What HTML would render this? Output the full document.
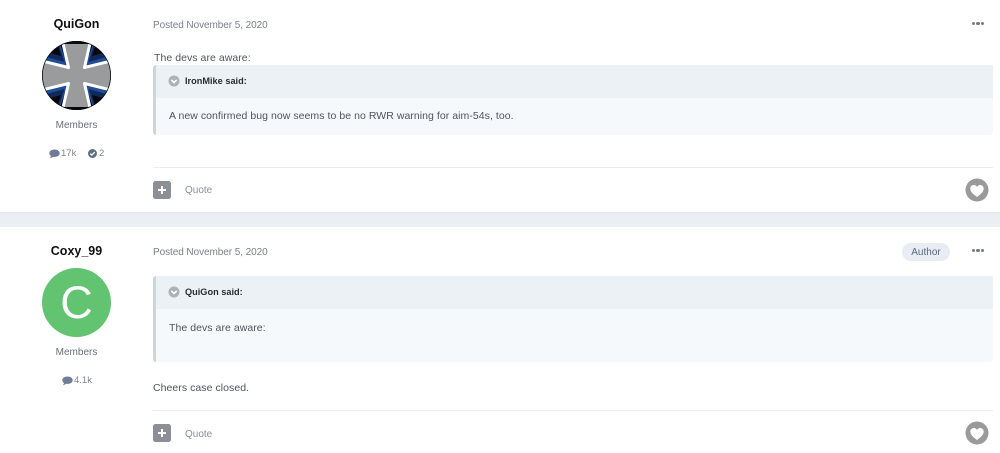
<!DOCTYPE html>
<html>
<head>
<meta charset="utf-8">
<style>
html,body{margin:0;padding:0;background:#fff}
body{position:relative;width:1000px;height:453px;overflow:hidden;font-family:"Liberation Sans",sans-serif;color:#4a4e55;filter:blur(.35px)}
.t{position:absolute;white-space:nowrap;line-height:16px}
.name{font-size:12.5px;font-weight:bold;color:#111;width:153px;left:0;text-align:center}
.mem{font-size:10px;color:#6b6f78;left:0;width:153px;text-align:center}
.date{font-size:10px;color:#7b7f88;left:153px;letter-spacing:-.07px}
.body{font-size:10.5px;letter-spacing:.05px;color:#50545c}
.stat{font-size:9.5px;color:#7f8590}
.bold{font-size:9.2px;font-weight:bold;color:#2a2d33}
.box{position:absolute;left:153px;width:840px;background:#f5f9fc;border-left:3px solid #cfd4da;border-radius:3px;box-sizing:border-box}
.boxh{position:absolute;left:0;right:0;top:0;height:33px;background:#ecf1f5}
.line{position:absolute;left:153px;width:840px;height:1px;background:#eaecee}
.plus{position:absolute;left:153px;width:18px;height:18px;border-radius:2.5px;background:#8d8f97}
.plus:before{content:"";position:absolute;left:5px;top:8px;width:8px;height:2px;background:#fff}
.plus:after{content:"";position:absolute;left:8px;top:5px;width:2px;height:8px;background:#fff}
.quote{font-size:10px;color:#8a8e96;left:185px}
.dots{position:absolute;left:972px;width:12px;height:4px;display:flex;gap:.9px}
.dots i{display:block;width:3.4px;height:3.4px;border-radius:50%;background:#767c88}
svg{position:absolute;display:block}
</style>
</head>
<body>

<div class="t name" style="top:16px">QuiGon</div>
<svg style="left:42px;top:41px" width="69" height="69" viewBox="0 0 69 69">
  <defs><clipPath id="c"><circle cx="34.5" cy="34.5" r="34.5"/></clipPath></defs>
  <g clip-path="url(#c)">
    <rect width="69" height="69" fill="#05070c"/>
    <path d="M43 26 L52 0 L69 17 V22Z M26 26 L17 0 L0 17 V22Z M43 43 L52 69 L69 52 V47Z M26 43 L17 69 L0 52 V47Z" fill="#1f4d96"/>
    <path d="M46.500 21 L52 4 L66 15.500Z M22.500 21 L17 4 L3 15.500Z M46.500 48 L52 65 L66 53.500Z M22.500 48 L17 65 L3 53.500Z" fill="#10295a"/>
    <path d="M50 15 L53 5 L61 12Z M19 15 L16 5 L8 12Z M50 54 L53 64 L61 57Z M19 54 L16 64 L8 57Z" fill="#05070c"/>
    <path d="M20 -2 H49 L42.500 26.500 L71 19.500 V49.500 L42.500 42.500 L49 71 H20 L26.500 42.500 L-2 49.500 V19.500 L26.500 26.500Z" fill="#9a9b9d" stroke="#fff" stroke-width="3" stroke-linejoin="round"/>
    <rect x="0" y="0" width="69" height="3" fill="#0a0a0a"/>
    <rect x="0" y="66" width="69" height="3" fill="#0a0a0a"/>
    <circle cx="34.500" cy="34.500" r="34.200" fill="none" stroke="#0a0a0a" stroke-width="1"/>
  </g>
</svg>
<div class="t mem" style="top:118px">Members</div>
<svg style="left:49px;top:149px" width="11" height="10" viewBox="0 0 11 10"><path d="M5.500 .5C8.400 .5 10.700 2.100 10.700 4.200 10.700 6.300 8.400 7.900 5.500 7.900 5 7.900 4.500 7.900 4 7.800 3.200 8.500 2.100 9 .9 9.200 1.500 8.500 1.900 7.800 2 7 1 6.300 .3 5.300 .3 4.200 .3 2.100 2.600 .5 5.500 .5Z" fill="#6f7e96"/></svg>
<div class="t stat" style="left:61px;top:146px">17k</div>
<svg style="left:88px;top:149px" width="9" height="9" viewBox="0 0 9 9"><circle cx="4.500" cy="4.500" r="4.500" fill="#5f6f88"/><path d="M2.300 4.600 L3.900 6.100 L6.700 3.100" fill="none" stroke="#fff" stroke-width="1.300"/></svg>
<div class="t stat" style="left:99px;top:146px">2</div>

<div class="t date" style="top:18px">Posted November 5, 2020</div>
<div class="dots" style="top:22px"><i></i><i></i><i></i></div>
<div class="t body" style="left:154px;top:50px">The devs are aware:</div>

<div class="box" style="top:65px;height:70px">
  <div class="boxh"></div>
  <svg style="left:12px;top:10px" width="12" height="12" viewBox="0 0 12 12"><circle cx="6" cy="6" r="5.500" fill="#aeb2b8"/><path d="M3.300 4.900 L6 7.500 L8.700 4.900" fill="none" stroke="#fff" stroke-width="1.600"/></svg>
  <div class="t bold" style="left:29px;top:8px">IronMike said:</div>
  <div class="t body" style="left:13px;top:43px">A new confirmed bug now seems to be no RWR warning for aim-54s, too.</div>
</div>

<div class="line" style="top:167px"></div>
<div class="plus" style="top:181px"></div>
<div class="t quote" style="top:183px">Quote</div>
<svg style="left:965px;top:178px" width="24" height="24" viewBox="0 0 24 24"><circle cx="12" cy="12" r="11.500" fill="#9a9a9a"/><path d="M12 19C8 16 5.300 13.600 5.300 10.600 5.300 8.500 6.900 7 8.800 7 10.100 7 11.300 7.700 12 8.900 12.700 7.700 13.900 7 15.200 7 17.100 7 18.700 8.500 18.700 10.600 18.700 13.600 16 16 12 19Z" fill="#fff"/></svg>

<div style="position:absolute;left:0;top:212px;width:1000px;height:15px;background:#ebeef3;border-top:1px solid #e3e6ea;box-sizing:border-box"></div>

<div class="t name" style="top:243px">Coxy_99</div>
<div style="position:absolute;left:42px;top:268px;width:69px;height:69px;border-radius:50%;background:#62c370;overflow:hidden;color:#fff;font-size:45px;line-height:69px;text-align:center">C</div>
<div class="t mem" style="top:345px">Members</div>
<svg style="left:62px;top:376px" width="11" height="10" viewBox="0 0 11 10"><path d="M5.500 .5C8.400 .5 10.700 2.100 10.700 4.200 10.700 6.300 8.400 7.900 5.500 7.900 5 7.900 4.500 7.900 4 7.800 3.200 8.500 2.100 9 .9 9.200 1.500 8.500 1.900 7.800 2 7 1 6.300 .3 5.300 .3 4.200 .3 2.100 2.600 .5 5.500 .5Z" fill="#6f7e96"/></svg>
<div class="t stat" style="left:74px;top:373px">4.1k</div>

<div class="t date" style="top:245px">Posted November 5, 2020</div>
<div style="position:absolute;left:902px;top:243px;width:48px;height:18px;border-radius:9px;background:#e9edf3;color:#56688a;font-size:10px;line-height:19px;text-align:center">Author</div>
<div class="dots" style="top:249px"><i></i><i></i><i></i></div>

<div class="box" style="top:276px;height:86px">
  <div class="boxh"></div>
  <svg style="left:12px;top:10px" width="12" height="12" viewBox="0 0 12 12"><circle cx="6" cy="6" r="5.500" fill="#aeb2b8"/><path d="M3.300 4.900 L6 7.500 L8.700 4.900" fill="none" stroke="#fff" stroke-width="1.600"/></svg>
  <div class="t bold" style="left:29px;top:8px">QuiGon said:</div>
  <div class="t body" style="left:13px;top:44px">The devs are aware:</div>
</div>

<div class="t body" style="left:153px;top:380px">Cheers case closed.</div>
<div class="line" style="top:410px"></div>
<div class="plus" style="top:424px"></div>
<div class="t quote" style="top:427px">Quote</div>
<svg style="left:965px;top:421px" width="24" height="24" viewBox="0 0 24 24"><circle cx="12" cy="12" r="11.500" fill="#9a9a9a"/><path d="M12 19C8 16 5.300 13.600 5.300 10.600 5.300 8.500 6.900 7 8.800 7 10.100 7 11.300 7.700 12 8.900 12.700 7.700 13.900 7 15.200 7 17.100 7 18.700 8.500 18.700 10.600 18.700 13.600 16 16 12 19Z" fill="#fff"/></svg>

</body>
</html>
